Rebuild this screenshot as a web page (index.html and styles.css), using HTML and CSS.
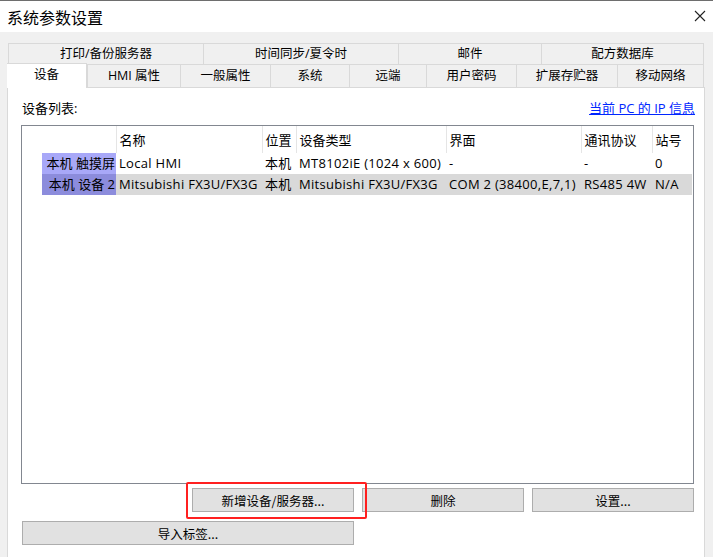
FILE: index.html
```html
<!DOCTYPE html>
<html lang="zh-CN">
<head>
  <meta charset="UTF-8">
  <title>系统参数设置</title>
  <link rel="stylesheet" href="styles.css">
</head>
<body>
  <div class="window">
    <div class="titlebar">
      <span class="title">系统参数设置</span>
      <svg class="close" width="12" height="12" viewBox="0 0 12 12">
        <path d="M1 1 L11 11 M11 1 L1 11" stroke="#222" stroke-width="1.1" fill="none"/>
      </svg>
    </div>

    <div class="dialog">
      <div class="tabs tabs-back">
        <div class="tab" style="width:195px">打印/备份服务器</div>
        <div class="tab" style="width:195px">时间同步/夏令时</div>
        <div class="tab" style="width:143px">邮件</div>
        <div class="tab" style="width:163px">配方数据库</div>
      </div>
      <div class="tabs tabs-front">
        <div class="tab active" style="width:80px">设备</div>
        <div class="tab" style="width:93px">HMI 属性</div>
        <div class="tab" style="width:90px">一般属性</div>
        <div class="tab" style="width:79px">系统</div>
        <div class="tab" style="width:77px">远端</div>
        <div class="tab" style="width:90px">用户密码</div>
        <div class="tab" style="width:101px">扩展存贮器</div>
        <div class="tab" style="width:87px">移动网络</div>
      </div>

      <div class="panel">
        <div class="list-head">
          <span>设备列表:</span>
          <a class="ip-link" href="#">当前 PC 的 IP 信息</a>
        </div>

        <div class="listbox">
          <table class="devices">
            <colgroup>
              <col style="width:94px">
              <col style="width:146px">
              <col style="width:34px">
              <col style="width:150px">
              <col style="width:135px">
              <col style="width:71px">
              <col style="width:40px">
            </colgroup>
            <tr class="head">
              <th></th>
              <th>名称</th>
              <th>位置</th>
              <th>设备类型</th>
              <th>界面</th>
              <th>通讯协议</th>
              <th>站号</th>
            </tr>
            <tr>
              <td class="rowhead"><span class="tag tag-1">本机 触摸屏</span></td>
              <td>Local HMI</td>
              <td>本机</td>
              <td>MT8102iE (1024 x 600)</td>
              <td>-</td>
              <td>-</td>
              <td>0</td>
            </tr>
            <tr class="selected">
              <td class="rowhead"><span class="tag tag-2">本机 设备 2</span></td>
              <td>Mitsubishi FX3U/FX3G</td>
              <td>本机</td>
              <td>Mitsubishi FX3U/FX3G</td>
              <td>COM 2 (38400,E,7,1)</td>
              <td>RS485 4W</td>
              <td>N/A</td>
            </tr>
          </table>
        </div>

        <div class="actions">
          <div class="btn-wrap">
            <button class="btn btn-add">新增设备/服务器...</button>
            <div class="highlight"></div>
          </div>
          <button class="btn">删除</button>
          <button class="btn">设置...</button>
        </div>
        <div class="actions-2">
          <button class="btn btn-import">导入标签...</button>
        </div>
      </div>
    </div>
  </div>
</body>
</html>
```

FILE: styles.css
```css
body {
  margin: 0;
  padding: 0;
  font-family: "Open Sans", "Noto Sans CJK SC", sans-serif;
  font-size: 13px;
  color: #000;
  background-color: #f0f0f0;
}

.window {
  width: 713px;
  height: 557px;
  overflow: hidden;
  background-color: #f0f0f0;
}

.titlebar {
  height: 31px;
  border-top: 1px solid #6e6e6e;
  background-color: #fff;
  display: flex;
  align-items: center;
  justify-content: space-between;
  padding: 0 7px 0 7px;
}

.title {
  font-family: "Noto Sans CJK SC", sans-serif;
  font-size: 16px;
  line-height: 20px;
}

.close {
  margin-top: -1px;
}

.dialog {
  padding: 11px 8px 0 7px;
}

.tabs {
  display: flex;
  height: 22px;
}

.tabs-back {
  margin-left: 1px;
}

.tab {
  box-sizing: border-box;
  border: 1px solid #d9d9d9;
  border-right: none;
  background-color: #f0f0f0;
  font-size: 12.5px;
  line-height: 20px;
  text-align: center;
  white-space: nowrap;
}

.tab:last-child {
  border-right: 1px solid #d9d9d9;
}

.tabs-front .tab {
  border-top: none;
  border-bottom: none;
  line-height: 22px;
}

.tabs-front .tab:first-child {
  border-left: none;
}

.tab.active {
  background-color: #fff;
  border: 1px solid #d9d9d9;
  border-bottom: none;
  height: 25px;
  margin-top: -2px;
  line-height: 21px;
  position: relative;
  z-index: 1;
}

.panel {
  background-color: #fff;
  border: 1px solid #d9d9d9;
  height: 480px;
  padding: 0 10px 0 13px;
}

.list-head {
  display: flex;
  justify-content: space-between;
  align-items: flex-end;
  height: 29px;
  line-height: 18px;
  padding-left: 1px;
}

.ip-link {
  color: #0026ff;
  text-decoration: underline;
  margin-right: -1px;
}

.listbox {
  margin-top: 8px;
  height: 357px;
  border: 1px solid #828790;
  overflow: hidden;
}

.devices {
  border-collapse: collapse;
  table-layout: fixed;
  width: 670px;
}

.devices th,
.devices td {
  padding: 0 0 0 3px;
  text-align: left;
  white-space: nowrap;
  overflow: hidden;
  font-weight: normal;
}

.devices th {
  height: 27px;
  border-right: 1px solid #e5e5e5;
  vertical-align: middle;
}

.devices th:last-child {
  border-right: none;
}

.devices td {
  height: 21px;
  line-height: 21px;
  letter-spacing: 0.3px;
}

.devices tr.selected td {
  background-color: #d9d9d9;
}

.devices td.rowhead,
.devices tr.selected td.rowhead {
  padding: 0;
  letter-spacing: 0;
  background-color: #fff;
}

.tag {
  display: block;
  margin-left: 20px;
  text-align: right;
  padding-right: 1px;
}

.tag-1 {
  background-color: #a8a8f8;
}

.tag-2 {
  background-color: #8c8cdc;
}

.actions {
  display: flex;
  gap: 8px;
  margin: 4px 0 0 171px;
}

.actions-2 {
  margin: 9px 0 0 1px;
}

.btn {
  box-sizing: border-box;
  width: 162px;
  height: 24px;
  border: 1px solid #adadad;
  background-color: #e1e1e1;
  font-family: "Noto Sans CJK SC", sans-serif;
  font-size: 12.5px;
  color: #000;
  padding: 0;
}

.btn-import {
  width: 332px;
}

.btn-wrap {
  position: relative;
}

.highlight {
  position: absolute;
  left: -6px;
  top: -6px;
  width: 177px;
  height: 33px;
  border: 2px solid #ff2020;
  border-radius: 2px;
}
```
